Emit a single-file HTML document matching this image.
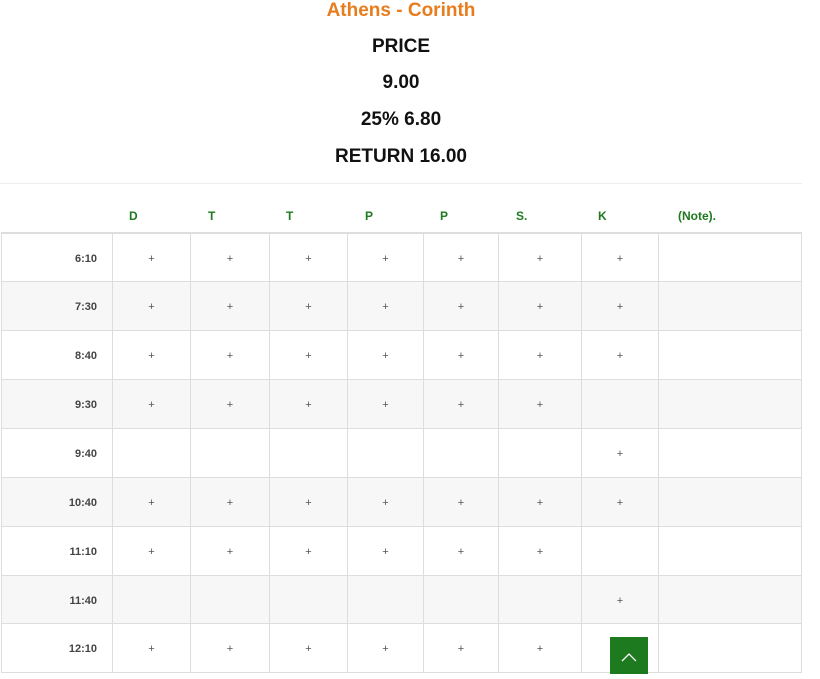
<!DOCTYPE html>
<html><head><style>
body{margin:0;width:820px;height:674px;background:#fff;font-family:"Liberation Sans",Arial,sans-serif;position:relative;overflow:hidden}
.t{position:absolute;left:0;width:802px;text-align:center;font-weight:bold;font-size:19px;color:#111}
.h{position:absolute;top:209px;font-size:12px;font-weight:bold;color:#1e7a1e}
.c{position:absolute;box-sizing:border-box;border-right:1px solid #ddd;border-bottom:1px solid #ddd;display:flex;align-items:center;justify-content:center;font-size:11px;color:#555;padding-top:2px}
.tm{justify-content:flex-end;padding-right:15px;font-weight:bold;color:#444}
</style></head><body>
<div class="t" style="top:0;color:#e87d1e">Athens - Corinth</div>
<div class="t" style="top:36px">PRICE</div>
<div class="t" style="top:72px">9.00</div>
<div class="t" style="top:109px">25% 6.80</div>
<div class="t" style="top:146px">RETURN 16.00</div>
<div style="position:absolute;top:183px;left:0;width:802px;height:1px;background:#eee"></div>
<div class="h" style="left:129px">D</div><div class="h" style="left:208px">T</div><div class="h" style="left:286px">T</div><div class="h" style="left:365px">P</div><div class="h" style="left:440px">P</div><div class="h" style="left:516px">S.</div><div class="h" style="left:598px">K</div><div class="h" style="left:678px">(Note).</div>
<div style="position:absolute;top:232px;left:1px;width:801px;height:2px;background:#ddd"></div>
<div id="g"></div>
<div style="position:absolute;left:610px;top:637px;width:38px;height:37px;background:#1e7a1e"><svg width="38" height="37"><path d="M12 24 L19 17 L26 24" stroke="#fff" stroke-width="1.3" fill="none"/></svg></div>
<script>
var xs=[1,113,191,270,348,424,499,582,659,802],ys=[234,282,331,380,429,478,527,576,624,673];
var times=["6:10","7:30","8:40","9:30","9:40","10:40","11:10","11:40","12:10"];
var m=["1111111","1111111","1111111","111111","0000001","1111111","111111","0000001","111111"];
var h="";
for(var r=0;r<9;r++){var bg=r%2?"#f7f7f7":"#fff";
for(var c=0;c<9;c++){var txt=c==0?times[r]:(c<8&&m[r][c-1]=="1"?"+":"");
h+='<div class="c'+(c==0?' tm':'')+'" style="left:'+xs[c]+'px;top:'+ys[r]+'px;width:'+(xs[c+1]-xs[c])+'px;height:'+(ys[r+1]-ys[r])+'px;background:'+bg+(c==0?';border-left:1px solid #ddd':'')+'">'+txt+'</div>';}}
document.getElementById("g").innerHTML=h;
</script>
</body></html>
